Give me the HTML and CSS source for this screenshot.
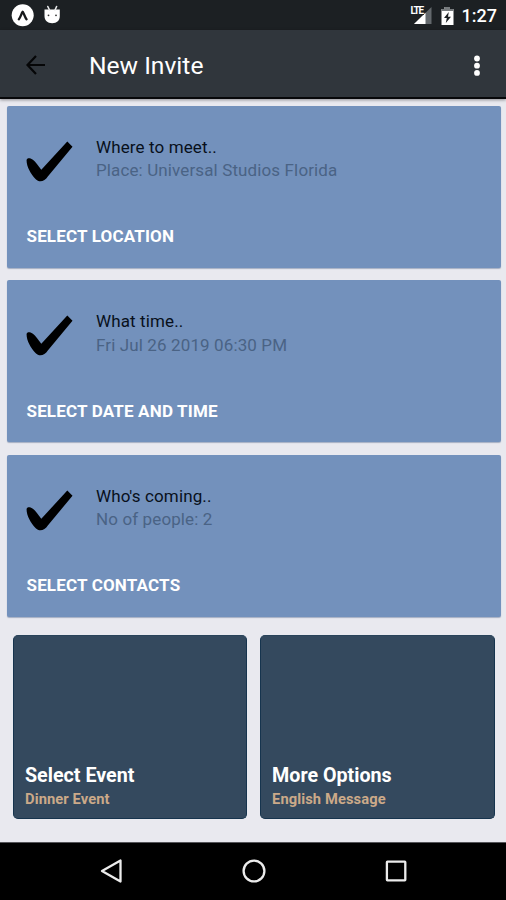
FILE: index.html
```html
<!DOCTYPE html>
<html lang="en">
<head>
<meta charset="utf-8">
<title>New Invite</title>
<link rel="stylesheet" href="styles.css">
</head>
<body>
<svg class="defs" aria-hidden="true"><symbol id="check" viewBox="0 0 47 41"><path d="M.6 19C1 16.500 4 16.800 6.500 18.500C10 21 13.500 26.500 15.300 28.800L41.300.5L46.500 5.800L22 35.200C18.500 40.500 13.500 42 9.500 38C4.500 33 .3 25 .6 19Z"/></symbol></svg>
<div class="status">
  <svg class="status-left" viewBox="0 0 70 30"><circle cx="22.700" cy="15.300" r="11" fill="#fff"/><path d="M18.800 19.300C20.500 17.800 21.300 13.500 22.700 11.800C24.100 13.500 25 17.800 26.600 19.300" fill="none" stroke="#17191b" stroke-width="2.300" stroke-linecap="round" stroke-linejoin="round"/><path d="M44.500 9.500H59.800V16C59.800 20.500 57 23.200 52.200 23.200S44.500 20.500 44.500 16Z" fill="#fff"/><path d="M47.800 6.500L49.500 10M56.600 6.500L55 10" stroke="#e9eaeb" stroke-width="1.600" stroke-linecap="round"/><circle cx="48.500" cy="15.300" r=".9" fill="#333"/><circle cx="56" cy="15.300" r=".9" fill="#333"/></svg>
  <div class="status-right">
    <div class="signal"><svg viewBox="0 0 20 20"><path d="M2 19L19.500 2V19Z" fill="#63686c"/><path d="M2 19L13.500 7.800V19Z" fill="#fff"/></svg><span class="lte">LTE</span></div>
    <svg class="battery" viewBox="0 0 13 20"><path d="M3.500 1H9V3H12.500V19H.5V3H3.500Z" fill="#fff"/><path d="M3.500 1H9V3H12.500V5H.5V3H3.500Z" fill="#777b7e"/><path d="M7.800 6L3 12H5.800L4.800 17L10 10.700H7Z" fill="#1c2023"/></svg>
    <span class="clock">1:27</span>
  </div>
</div>
<header class="bar">
  <svg class="back" viewBox="0 0 20 20"><path d="M19 10H2M10 1L1.500 10L10 19" fill="none" stroke="#050607" stroke-width="2.200"/></svg>
  <h1>New Invite</h1>
  <svg class="more" viewBox="0 0 8 22"><circle cx="4" cy="3.500" r="2.900"/><circle cx="4" cy="10.700" r="2.900"/><circle cx="4" cy="17.900" r="2.900"/></svg>
</header>
<main>
  <section class="card">
    <div class="info"><svg class="check"><use href="#check"/></svg><div><p class="label">Where to meet..</p><p class="value">Place: Universal Studios Florida</p></div></div>
    <div class="action">SELECT LOCATION</div>
  </section>
  <section class="card">
    <div class="info"><svg class="check"><use href="#check"/></svg><div><p class="label">What time..</p><p class="value">Fri Jul 26 2019 06:30 PM</p></div></div>
    <div class="action">SELECT DATE AND TIME</div>
  </section>
  <section class="card">
    <div class="info"><svg class="check"><use href="#check"/></svg><div><p class="label">Who's coming..</p><p class="value">No of people: 2</p></div></div>
    <div class="action">SELECT CONTACTS</div>
  </section>
  <div class="tiles">
    <section class="tile"><h2>Select Event</h2><p>Dinner Event</p></section>
    <section class="tile"><h2>More Options</h2><p>English Message</p></section>
  </div>
</main>
<nav>
  <svg viewBox="0 0 24 24"><path d="M20.500 1.500V22.500L2 12Z"/></svg>
  <svg viewBox="0 0 24 24"><circle cx="12" cy="12" r="10.400"/></svg>
  <svg viewBox="0 0 24 24"><rect x="2.900" y="2.700" width="18.400" height="18.600" rx=".5"/></svg>
</nav>
</body>
</html>
```
FILE: styles.css
```css
* { box-sizing: border-box; }
body { margin: 0; width: 506px; height: 900px; display: flex; flex-direction: column; overflow: hidden; background: #e9e9ef; font-family: Roboto, sans-serif; }
h1, h2, p { margin: 0; font-weight: 400; white-space: nowrap; }
svg { display: block; flex: none; }
.defs { width: 0; height: 0; position: absolute; }
.status { height: 30px; flex: none; display: flex; justify-content: space-between; background: #1c2023; }
.status-left { width: 70px; height: 30px; }
.status-right { display: flex; align-items: center; padding-right: 9px; color: #fff; }
.signal { position: relative; width: 20px; height: 20px; margin-right: 9px; }
.signal svg { width: 20px; height: 20px; }
.lte { position: absolute; left: -1px; top: 1px; padding-right: 1px; background: #1c2023; font-size: 10px; line-height: 9px; font-weight: 700; letter-spacing: -1.300px; }
.battery { width: 13px; height: 20px; margin: 2px 8px 0 0; }
.clock { font-size: 18px; line-height: 30px; font-weight: 500; position: relative; top: 1px; }
.bar { height: 69px; flex: none; display: flex; align-items: center; padding: 2px 25px 0 25.500px; background: #30363c; border-bottom: 2px solid #07080a; box-shadow: 0 1px 3px #0006; z-index: 1; }
.back { width: 20px; height: 20px; }
h1 { flex: 1; margin-left: 43.500px; padding-top: 2px; color: #fff; font-size: 24.600px; line-height: 30px; }
.more { width: 8px; height: 22px; fill: #fff; margin-top: 2px; }
main { flex: 1; display: flex; flex-direction: column; gap: 12.900px; padding: 7px 5px 0 7px; }
.card { height: 161.600px; flex: none; padding: 30px 20px 0; background: #7391bc; border-radius: 2px; box-shadow: 0 1px 1px #3e587f66; }
.info { display: flex; align-items: flex-start; gap: 23px; height: 82.400px; }
.check { width: 47px; height: 41px; margin: 5px 0 0 -1px; }
.label, .value { font-size: 17px; line-height: 23.400px; letter-spacing: .12px; }
.label { color: #08101b; }
.value { color: #4a6385; }
.action { margin-left: -.5px; color: #fff; font-size: 17px; line-height: 36px; font-weight: 700; letter-spacing: .17px; white-space: nowrap; }
.tiles { display: flex; gap: 12.600px; padding: 6px 6.500px 0 6px; }
.tile { flex: 1; height: 184px; display: flex; flex-direction: column; justify-content: flex-end; padding: 0 11px 9px; background: #34495e; border-radius: 5px; border: 1px solid #16344e; border-top-color: #29435a; }
h2 { color: #fff; font-size: 19.700px; line-height: 26px; font-weight: 700; }
.tile p { color: #cba989; font-size: 14.700px; line-height: 20px; font-weight: 700; letter-spacing: .1px; }
nav { height: 58px; flex: none; display: flex; justify-content: center; gap: 118px; padding: 16px 0 0 2px; background: #000; border-top: 1px solid #55555a; }
nav svg { width: 24px; height: 24px; fill: none; stroke: #ececec; stroke-width: 2.300; stroke-linejoin: round; }
```
